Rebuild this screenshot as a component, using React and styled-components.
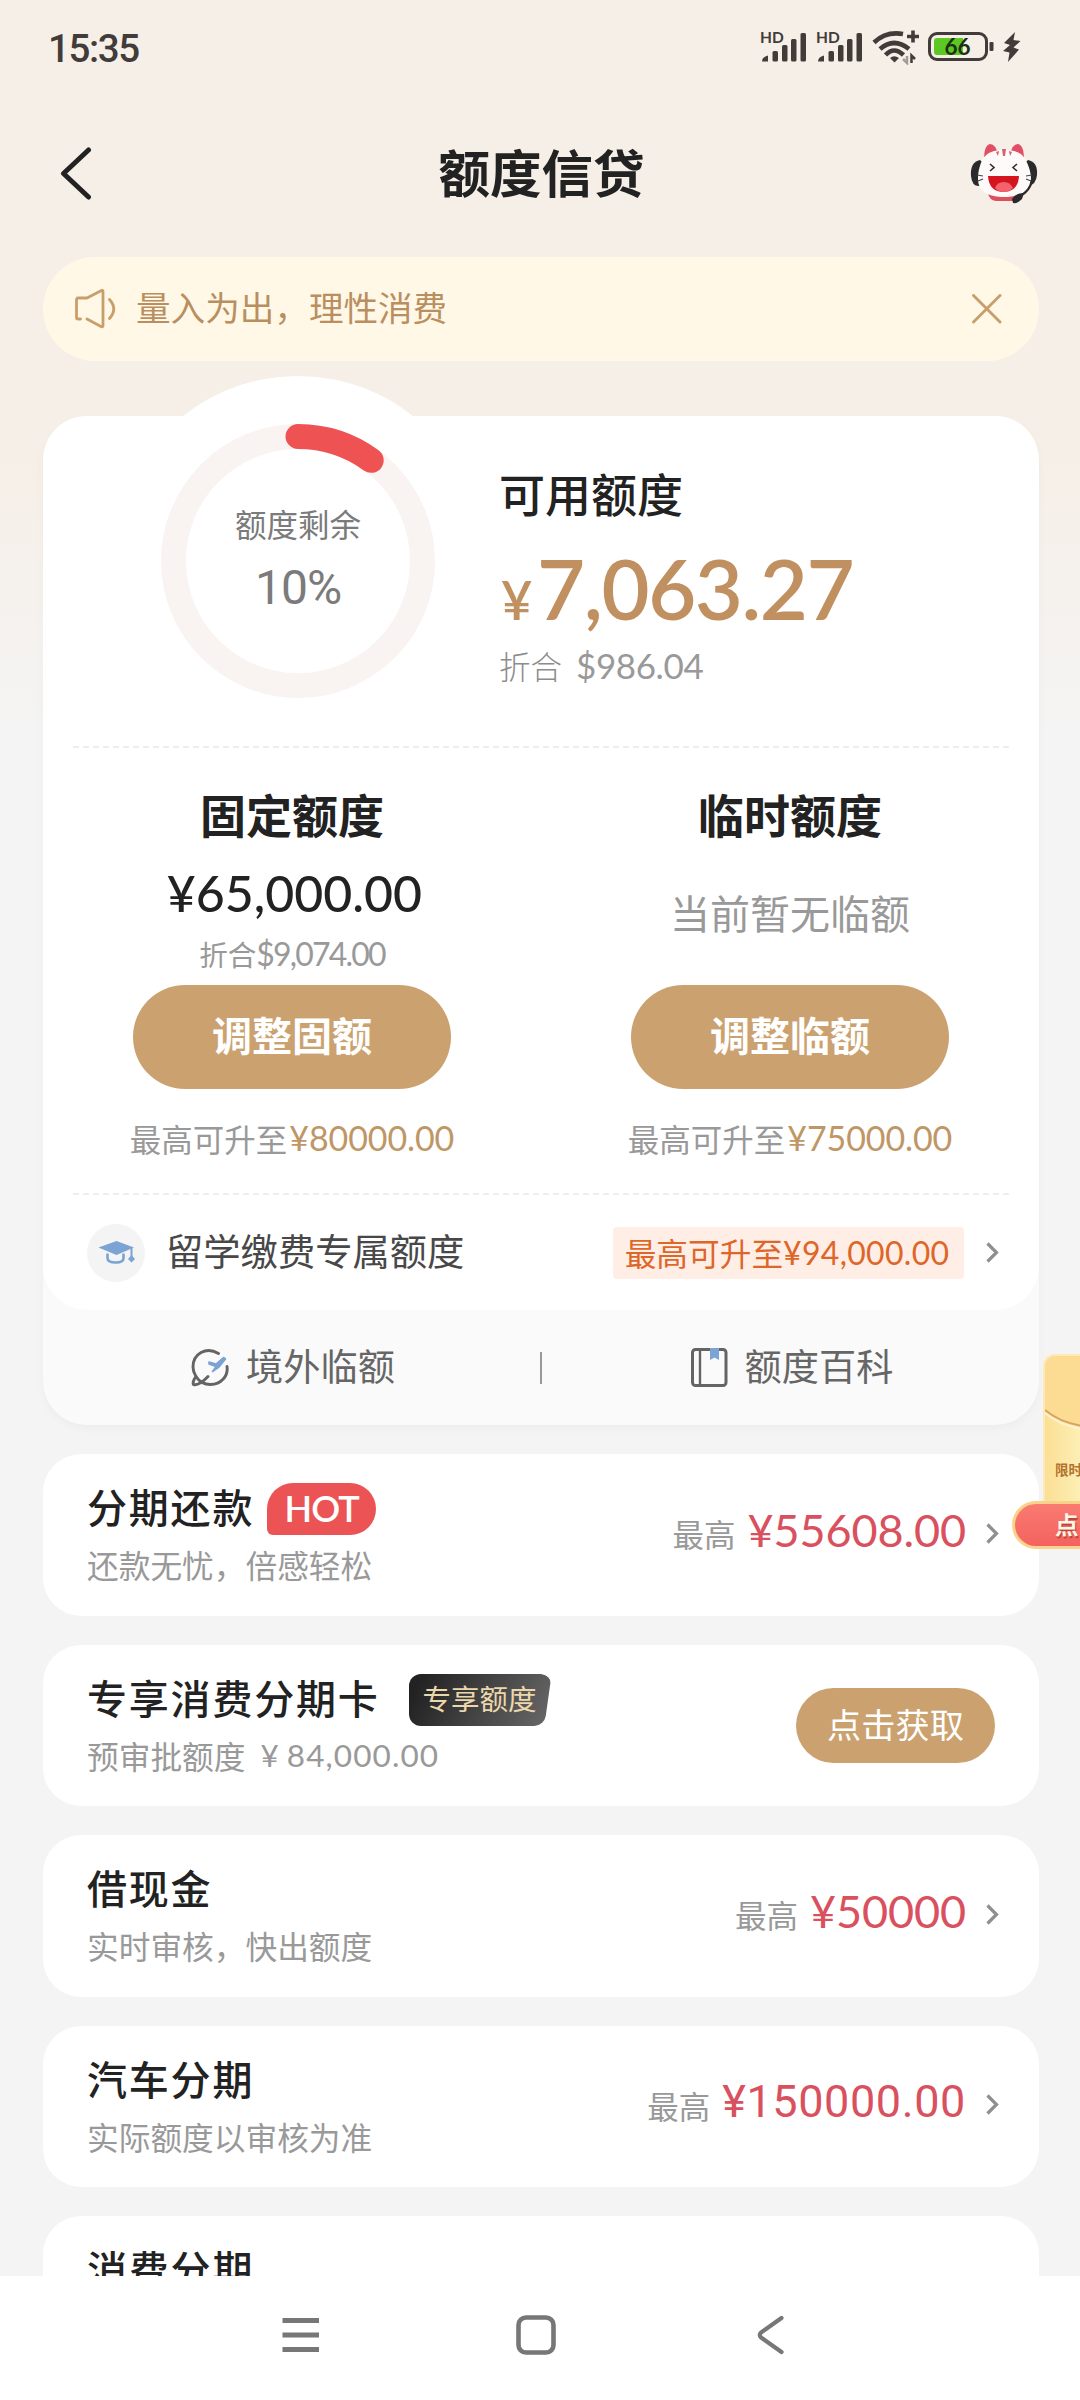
import React from 'react'
import styled, { createGlobalStyle } from 'styled-components'

const offers = [
  { title: '分期还款', desc: '还款无忧，倍感轻松', amount: '¥55608.00', hot: true },
  { title: '专享消费分期卡', desc: '预审批额度', price: '84,000.00', badge: '专享额度', action: '点击获取' },
  { title: '借现金', desc: '实时审核，快出额度', amount: '¥50000' },
  { title: '汽车分期', desc: '实际额度以审核为准', amount: '¥150000.00', narrow: true },
  { title: '消费分期' },
]

const Signal = () => (
  <svg width="48" height="36" viewBox="0 0 48 36" fill="#413c3a">
    <text x="0" y="14" fontFamily="Lato, sans-serif" fontWeight="700" fontSize="15.500">HD</text>
    <path d="M2 32.500Q2 28 8 26.500V32.500Z" />
    <rect x="12.500" y="22" width="5.500" height="10.500" rx="1.500" />
    <rect x="22" y="16" width="5.500" height="16.500" rx="1.500" />
    <rect x="31" y="10" width="5.500" height="22.500" rx="1.500" />
    <rect x="40.500" y="4" width="5.500" height="28.500" rx="1.500" />
  </svg>
)

const Wifi = () => (
  <svg width="48" height="36" viewBox="0 0 48 36" fill="none" stroke="#413c3a" strokeWidth="4.600">
    <path d="M2 13.500Q14 2 31 5" />
    <path d="M8 20Q22 8 37 20" />
    <path d="M13.500 26Q22 17 31.500 26" />
    <path d="M18 29Q22 25.500 27 29L22.500 33.500Z" fill="#413c3a" stroke="none" />
    <path d="M35 7.500H47M41 1.500V13.500" strokeWidth="3.600" />
    <path d="M35 27V34L31 30" stroke="#a39d99" strokeWidth="2.500" />
    <path d="M39.500 34V26.500L43 30" strokeWidth="2.500" />
  </svg>
)

const Battery = () => (
  <svg width="67" height="30" viewBox="0 0 67 30">
    <rect x="1.500" y="1.500" width="57" height="26" rx="7.500" fill="none" stroke="#413c3a" strokeWidth="3" />
    <path d="M9 6H35V23H9Q6 23 6 20V9Q6 6 9 6Z" fill="#5dc823" />
    <rect x="61.500" y="10" width="4" height="9" rx="1.200" fill="#413c3a" />
    <text x="29.500" y="22.500" textAnchor="middle" fontFamily="Lato, sans-serif" fontWeight="700" fontSize="22.500" fill="#1c3212">66</text>
  </svg>
)

const Bolt = () => (
  <svg width="18" height="30" viewBox="0 0 18 30" fill="#413c3a">
    <path d="M12 0L1 11L7 13L0 19L6.500 20.500L5 30L16 17.500L10.500 15.500L17.500 9L10.500 8Z" />
  </svg>
)

const Cat = () => (
  <svg width="68" height="62" viewBox="0 0 68 62">
    <path d="M10 17Q0 19 1 33Q2 44 10 43L13 20Z" fill="#2b2a2b" />
    <path d="M58 17Q68 19 67 32Q66 42 58 43L55 20Z" fill="#2b2a2b" />
    <path d="M14 17Q14 2 20 1Q26 1 28 12ZM54 17Q54 2 48 1Q42 1 40 12Z" fill="#e24e63" />
    <path d="M18 50H50Q50 57 43 58H26Q19 57 18 50Z" fill="#dc4f5b" />
    <path d="M34 7C44 7 51 9 55 16C58 21 61 28 61 36C61 49 48 54 34 54C20 54 8 49 8 36C8 28 10 21 13 16C17 9 24 7 34 7Z" fill="#fffafa" />
    <path d="M32 6H36L35 13H33ZM26 9L29 8L28 13ZM42 9L39 8L40 13Z" fill="#d8626b" />
    <path d="M20 21L24 24.500L20 28M47 21L43 24.500L47 28" fill="none" stroke="#332c2d" strokeWidth="1.600" />
    <path d="M18 33H49Q48 49 34 49Q19 49 18 33Z" fill="#d4141f" />
    <path d="M25 45Q27 39 34 39Q40 39 43 45Q39 49 34 49Q28 49 25 45Z" fill="#f4626c" />
    <path d="M7 32L13 33M8 38L13 36M62 32L56 33M61 38L56 36" stroke="#4a4344" strokeWidth="1.200" />
    <path d="M62 37Q60 48 50 53" fill="none" stroke="#2b2a2b" strokeWidth="2.200" />
    <path d="M42 56Q45 50 54 50L52 56Q47 61 43 60Z" fill="#2b2a2b" />
  </svg>
)

const Speaker = () => (
  <svg width="42" height="40" viewBox="0 0 42 40" fill="none" stroke="#c89f6b" strokeWidth="2.800" strokeLinecap="round" strokeLinejoin="round">
    <path d="M5.500 30H3Q1.500 30 1.500 28.500V11Q1.500 9 3 9H12L26.500 1.500Q28 1 28 2.500V36.500Q28 38.500 26 37.500L12 30" />
    <path d="M34.500 10.500Q43 20 34.500 29.500" />
  </svg>
)

const GradCap = () => (
  <svg width="37" height="26" viewBox="0 0 37 26">
    <path d="M0.500 7.500L18.500 1L36 7.500L18.500 15Z" fill="#7ba3d3" />
    <path d="M9.500 13.500V18Q9.500 22.500 18 22.500Q25.500 22.500 25.500 18V13.500" fill="none" stroke="#7ba3d3" strokeWidth="2.600" />
    <path d="M33.500 8V20" stroke="#7ba3d3" strokeWidth="2" />
    <path d="M33.500 15L37 19L33.500 22.500L30 19Z" fill="#7ba3d3" />
  </svg>
)

const Globe = () => (
  <svg width="38" height="40" viewBox="0 0 38 40" fill="none" stroke="#646464" strokeWidth="2.900" strokeLinecap="round">
    <path d="M27.500 5.500C15 -2 2 6 2 19Q2 24 5 28.500Q1 34 2.500 36.500Q8 38 17 28.500" />
    <path d="M5 28.500Q10 36.500 19.500 36.500C30 36.500 37.500 28 36 18.500" />
    <path d="M18 14L25 16L32.500 9.500L34.500 11L28 19L21.500 23.500L25 18.500L18 16Z" fill="#7ba3d3" stroke="#7ba3d3" strokeWidth="1.600" strokeLinejoin="round" />
  </svg>
)

const Book = () => (
  <svg width="37" height="40" viewBox="0 0 37 40">
    <rect x="1.500" y="1.500" width="33.500" height="36" rx="3" fill="none" stroke="#646464" strokeWidth="3" />
    <path d="M9 2V37" stroke="#646464" strokeWidth="2.400" />
    <path d="M19 0H28V12L23.500 9.500L19 12Z" fill="#7ba3d3" />
  </svg>
)

const Chevron = () => (
  <svg width="13" height="21" viewBox="0 0 13 21" fill="none" stroke="#8f8f8f" strokeWidth="3.200">
    <path d="M1.500 1.500L10.500 10.500L1.500 19.500" />
  </svg>
)

const App = () => {
  return (
    <Screen>
      <GlobalStyle />
      <Body>
        <StatusBar>
          <Time>15:35</Time>
          <StatusIcons>
            <Signal />
            <Signal />
            <Wifi />
            <Battery />
            <Bolt />
          </StatusIcons>
        </StatusBar>

        <Header>
          <svg width="32" height="54" viewBox="0 0 32 54" fill="none" stroke="#222" strokeWidth="5" strokeLinecap="round" strokeLinejoin="round">
            <path d="M28.500 3L3.500 26.500L28.500 50" />
          </svg>
          <Title>额度信贷</Title>
          <Cat />
        </Header>

        <Notice>
          <Speaker />
          <NoticeText>量入为出，理性消费</NoticeText>
          <svg width="30" height="30" viewBox="0 0 30 30" stroke="#c89f6b" strokeWidth="2.900" strokeLinecap="round">
            <path d="M1.500 1.500L28 28M28 1.500L1.500 28" />
          </svg>
        </Notice>

        <LimitCard>
          <LimitMain>
            <Available>
              <Gauge>
                <svg width="370" height="370" viewBox="0 0 370 370" fill="none">
                  <circle cx="185" cy="185" r="185" fill="#fff" />
                  <circle cx="185" cy="185" r="124.500" stroke="#f9f4f1" strokeWidth="25" />
                  <path d="M185 60.500A124.500 124.500 0 0 1 258.200 84.300" stroke="#ee5253" strokeWidth="25" strokeLinecap="round" />
                </svg>
                <GaugeLabel>
                  <Text $size={31.5} $line={44} $color="#7b7b7b">额度剩余</Text>
                  <Percent>10%</Percent>
                </GaugeLabel>
              </Gauge>
              <AvailableInfo>
                <Text $size={46} $line={60} $weight={500}>可用额度</Text>
                <BigAmount><small>¥</small>7,063.27</BigAmount>
                <Converted>
                  <Text $size={31.5} $line={40} $weight={300} $color="#8c8c8c">折合</Text>
                  <Num $size={35} $spacing={-0.4} $color="#999">$986.04</Num>
                </Converted>
              </AvailableInfo>
            </Available>

            <Dashed />

            <Columns>
              <Column>
                <Text $size={46} $line={52} $weight={700}>固定额度</Text>
                <FixedAmount>¥65,000.00</FixedAmount>
                <FixedConverted>
                  <Text $size={28.5} $line={36} $color="#999">折合</Text>
                  <Num $size={32} $spacing={-1.8} $color="#999">$9,074.00</Num>
                </FixedConverted>
                <AdjustButton>调整固额</AdjustButton>
                <UpTo>
                  <Text $size={31.5} $line={44} $color="#999">最高可升至</Text>
                  <Num $size={34} $spacing={-0.1} $color="#bf9665">¥80000.00</Num>
                </UpTo>
              </Column>
              <Column>
                <Text $size={46} $line={52} $weight={700}>临时额度</Text>
                <NoTemp>当前暂无临额</NoTemp>
                <AdjustButton>调整临额</AdjustButton>
                <UpTo>
                  <Text $size={31.5} $line={44} $color="#999">最高可升至</Text>
                  <Num $size={34} $spacing={-0.1} $color="#bf9665">¥75000.00</Num>
                </UpTo>
              </Column>
            </Columns>

            <Dashed />

            <StudyRow>
              <StudyIcon><GradCap /></StudyIcon>
              <StudyName>留学缴费专属额度</StudyName>
              <StudyTag>
                <Text $size={31.7} $line={44} $color="#de6628">最高可升至</Text>
                <Num $size={32} $spacing={0.3} $color="#de6628">¥94,000.00</Num>
              </StudyTag>
              <Chevron />
            </StudyRow>
          </LimitMain>

          <LimitFooter>
            <FooterLink>
              <Globe />
              <Text $size={37.2} $line={48} $color="#666">境外临额</Text>
            </FooterLink>
            <FooterLine />
            <FooterLink>
              <Book />
              <Text $size={37.2} $line={48} $color="#666">额度百科</Text>
            </FooterLink>
          </LimitFooter>
        </LimitCard>

        {offers.map((item) => (
          <OfferCard key={item.title}>
            <OfferInfo>
              <OfferHead>
                <OfferTitle>{item.title}</OfferTitle>
                {item.hot && <Hot>HOT</Hot>}
                {item.badge && <Exclusive>{item.badge}</Exclusive>}
              </OfferHead>
              {item.desc && (
                <OfferDesc>
                  {item.desc}
                  {item.price && <OfferPrice><i>¥</i>{item.price}</OfferPrice>}
                </OfferDesc>
              )}
            </OfferInfo>
            {item.action && <GetButton>{item.action}</GetButton>}
            {item.amount && (
              <OfferAmount>
                <Text $size={31.5} $line={44} $color="#999">最高</Text>
                <Red $narrow={item.narrow}>{item.amount}</Red>
                <Chevron />
              </OfferAmount>
            )}
          </OfferCard>
        ))}
      </Body>

      <Floating>
        <Envelope>
          <svg width="37" height="148" viewBox="0 0 37 148">
            <path d="M0 0H37V70Q14 66 0 54Z" fill="#fcdb93" />
            <path d="M0 54Q14 66 37 70" fill="none" stroke="#d9a462" strokeWidth="2" />
            <path d="M0 57Q14 69 37 73" fill="none" stroke="#fff3cf" strokeWidth="2" />
          </svg>
          <EnvelopeText>限时</EnvelopeText>
        </Envelope>
        <FloatButton>点</FloatButton>
      </Floating>

      <NavBar>
        <svg width="38" height="40" viewBox="0 0 38 40" stroke="#777" strokeWidth="4.800">
          <path d="M0.500 5.500H37M0.500 20H37M0.500 34.500H37" />
        </svg>
        <svg width="40" height="40" viewBox="0 0 40 40" fill="none" stroke="#777" strokeWidth="4.600">
          <rect x="2.500" y="2.500" width="35" height="35" rx="7.500" />
        </svg>
        <svg width="28" height="40" viewBox="0 0 28 40" fill="none" stroke="#777" strokeWidth="4.200" strokeLinecap="round">
          <path d="M24.500 3L4 17.500Q1.500 20 4 22.500L24.500 37" />
        </svg>
      </NavBar>
    </Screen>
  )
}

export default App

const GlobalStyle = createGlobalStyle`
  * {
    box-sizing: border-box;
  }

  body {
    margin: 0;
    font-family: "Noto Sans CJK SC", sans-serif;
    color: #222;
  }

  svg {
    display: block;
    flex-shrink: 0;
  }
`

const Screen = styled.div`
  position: relative;
  width: 1080px;
  height: 2400px;
  overflow: hidden;
  white-space: nowrap;
  background: linear-gradient(#f6efe8 0, #f6efe7 460px, #f4f4f4 740px);
`

const Body = styled.div`
  height: 2276px;
  padding: 0 41px 0 43px;
  overflow: hidden;
`

const Text = styled.div`
  font-size: ${(p) => p.$size}px;
  line-height: ${(p) => p.$line}px;
  font-weight: ${(p) => p.$weight || 400};
  color: ${(p) => p.$color || '#222'};
`

const Num = styled.div`
  font-family: Lato, sans-serif;
  font-size: ${(p) => p.$size}px;
  line-height: 40px;
  letter-spacing: ${(p) => p.$spacing}px;
  color: ${(p) => p.$color};
`

const StatusBar = styled.div`
  display: flex;
  justify-content: space-between;
  align-items: center;
  height: 94px;
  padding: 0 18px 0 5px;
`

const Time = styled.div`
  margin-top: 2px;
  font-family: Roboto, sans-serif;
  font-size: 38.5px;
  letter-spacing: -1.4px;
  font-weight: 500;
  color: #413c3a;
`

const StatusIcons = styled.div`
  display: flex;
  align-items: center;
  gap: 8px;
`

const Header = styled.div`
  display: flex;
  justify-content: space-between;
  align-items: center;
  height: 159px;
  padding: 0 1px 0 17px;
`

const Title = styled.div`
  font-size: 51.5px;
  line-height: 60px;
  font-weight: 700;
  padding-left: 21px;
  margin-top: -6px;
`

const Notice = styled.div`
  display: flex;
  align-items: center;
  height: 104px;
  margin-top: 4px;
  padding: 0 37px 0 32px;
  border-radius: 52px;
  background: #fff8e7;
`

const NoticeText = styled.div`
  flex: 1;
  margin: -6px 0 0 19px;
  font-size: 34.6px;
  color: #ba8f5f;
`

const LimitCard = styled.div`
  margin-top: 55px;
  border-radius: 44px;
  background: #fafafa;
  box-shadow: 0 4px 8px rgba(0, 0, 0, 0.03);
`

const LimitMain = styled.div`
  height: 894px;
  border-radius: 44px;
  background: #fff;
`

const Available = styled.div`
  display: flex;
  height: 330px;
`

const Gauge = styled.div`
  display: grid;
  width: 370px;
  height: 370px;
  margin: -40px 0 0 70px;

  > * {
    grid-area: 1 / 1;
  }
`

const GaugeLabel = styled.div`
  display: flex;
  flex-direction: column;
  align-items: center;
  padding-top: 125px;
`

const Percent = styled.div`
  margin-top: 18px;
  font-family: Roboto, sans-serif;
  font-size: 48px;
  line-height: 50px;
  letter-spacing: -1px;
  color: #7b7b7b;
`

const AvailableInfo = styled.div`
  padding: 46px 0 0 16px;
`

const BigAmount = styled.div`
  margin-top: 21px;
  font-family: Lato, sans-serif;
  font-size: 83px;
  line-height: 90px;
  font-weight: 600;
  letter-spacing: -1.4px;
  color: #c09060;

  small {
    margin: 0 6px 0 2px;
    font-size: 54px;
    line-height: 0;
  }
`

const Converted = styled.div`
  display: flex;
  align-items: center;
  gap: 14px;
  margin-top: 12px;
`

const Dashed = styled.div`
  height: 2px;
  margin: 0 27px 0 30px;
  background: repeating-linear-gradient(90deg, #eee 0 6px, #fff 6px 10px);
`

const Columns = styled.div`
  display: grid;
  grid-template-columns: 498px 498px;
  height: 445px;
  padding-top: 39px;
`

const Column = styled.div`
  display: flex;
  flex-direction: column;
  align-items: center;
`

const FixedAmount = styled.div`
  margin: 24px 0 0 5px;
  font-family: Lato, sans-serif;
  font-size: 50px;
  line-height: 60px;
  font-weight: 500;
`

const FixedConverted = styled.div`
  display: flex;
  align-items: center;
  height: 36px;
  margin-top: 13px;
`

const NoTemp = styled.div`
  margin-top: 45px;
  font-size: 40px;
  line-height: 56px;
  color: #999;
`

const AdjustButton = styled.button`
  width: 318px;
  height: 104px;
  margin-top: auto;
  padding: 0 0 6px;
  border: none;
  border-radius: 52px;
  background: #cba26f;
  color: #fff;
  font-family: inherit;
  font-size: 40px;
  font-weight: 700;
`

const UpTo = styled.div`
  display: flex;
  align-items: center;
  gap: 2px;
  height: 44px;
  margin: 27px 0 33px;
`

const StudyRow = styled.div`
  display: flex;
  align-items: center;
  height: 115px;
  padding: 0 40px 0 44px;
`

const StudyIcon = styled.div`
  display: flex;
  align-items: center;
  justify-content: center;
  width: 58px;
  height: 58px;
  border-radius: 50%;
  background: #f4f4f4;
`

const StudyName = styled.div`
  flex: 1;
  margin: -5px 0 0 21px;
  font-size: 37.3px;
  color: #484848;
`

const StudyTag = styled.div`
  display: flex;
  align-items: center;
  justify-content: center;
  width: 351px;
  height: 52px;
  margin-right: 22px;
  padding-right: 3px;
  border-radius: 4px;
  background: #feeee6;

  ${Text} {
    margin-top: -2px;
  }
`

const LimitFooter = styled.div`
  display: flex;
  align-items: center;
  height: 115px;
`

const FooterLink = styled.div`
  display: flex;
  flex: 1;
  align-items: center;
  justify-content: center;
  gap: 17px;
  padding-left: 3px;

  ${Text} {
    margin-top: -5px;
  }
`

const FooterLine = styled.div`
  width: 2px;
  height: 32px;
  background: #999;
`

const OfferCard = styled.div`
  display: flex;
  justify-content: space-between;
  height: 161.5px;
  margin-top: 29px;
  padding: 29px 40px 0 44px;
  border-radius: 38px;
  background: #fff;
`

const OfferInfo = styled.div``

const OfferHead = styled.div`
  display: flex;
  align-items: center;
  height: 52px;
`

const OfferTitle = styled.div`
  margin-top: -6px;
  font-size: 40px;
  font-weight: 500;
  letter-spacing: 1.8px;
`

const OfferDesc = styled.div`
  display: flex;
  margin-top: 7px;
  font-size: 31.7px;
  line-height: 44px;
  color: #999;
`

const OfferPrice = styled.span`
  margin-left: 15px;
  font-family: Lato, sans-serif;
  font-size: 31.5px;
  letter-spacing: 1.1px;

  i {
    margin-right: 7px;
    font-style: normal;
  }
`

const Hot = styled.div`
  width: 109px;
  height: 52px;
  margin-left: 13px;
  border-radius: 26px 26px 26px 6px;
  background: #ec5354;
  color: #fff;
  font-family: Lato, sans-serif;
  font-size: 36px;
  line-height: 50px;
  font-weight: 600;
  letter-spacing: -0.8px;
  text-align: center;
`

/* slanted right edge */
const Exclusive = styled.div`
  position: relative;
  width: 143px;
  height: 52px;
  margin-left: 29px;
  padding-left: 14px;
  overflow: hidden;
  border-radius: 12px;
  color: #ecd7ad;
  font-size: 28.5px;
  line-height: 48px;
  z-index: 0;

  &::before {
    content: '';
    position: absolute;
    inset: 0 4px 0 -40px;
    z-index: -1;
    border-radius: 10px;
    background: linear-gradient(110deg, #222 25%, #666);
    transform: skewX(-8deg);
  }
`

const GetButton = styled.button`
  width: 199px;
  height: 75px;
  margin: 14px 4px 0 0;
  padding: 0 0 4px;
  border: none;
  border-radius: 38px;
  background: #cba26f;
  color: #fff;
  font-family: inherit;
  font-size: 34.2px;
`

const OfferAmount = styled.div`
  display: flex;
  align-items: center;
  height: 60px;
  margin-top: 20px;

  svg {
    margin-left: 20px;
  }
`

const Red = styled.div`
  margin: -6px 0 0 12px;
  font-family: ${(p) => (p.$narrow ? 'Roboto' : 'Lato')}, sans-serif;
  font-size: 45px;
  line-height: 50px;
  letter-spacing: ${(p) => (p.$narrow ? 0.6 : -0.1)}px;
  color: #d9505e;
`

const Floating = styled.div`
  position: absolute;
  top: 1354px;
  right: 0;
  width: 68px;
`

const Envelope = styled.div`
  position: relative;
  height: 150px;
  margin-left: 31px;
  overflow: hidden;
  border: 2px solid #fdeab8;
  border-right: none;
  border-radius: 12px 0 0 0;
  background: linear-gradient(90deg, #fbdf95, #fdefb4);
`

const EnvelopeText = styled.div`
  position: absolute;
  top: 103px;
  left: 10px;
  font-size: 13.5px;
  font-weight: 700;
  color: #b3732d;
`

const FloatButton = styled.div`
  height: 48px;
  margin-top: -3px;
  padding-left: 40px;
  position: relative;
  border: 3px solid #fbd28b;
  border-right: none;
  border-radius: 24px 0 0 24px;
  background: linear-gradient(#f97b72, #f4625f);
  color: #fff6e6;
  font-size: 23.5px;
  line-height: 41px;
  font-weight: 700;
  text-shadow: 1px 2px 1px #b8433c;
`

const NavBar = styled.div`
  display: flex;
  align-items: center;
  justify-content: space-between;
  height: 124px;
  padding: 0 295px 6px 282px;
  background: #fff;

  svg:nth-child(2) {
    margin-right: 5px;
  }
`
